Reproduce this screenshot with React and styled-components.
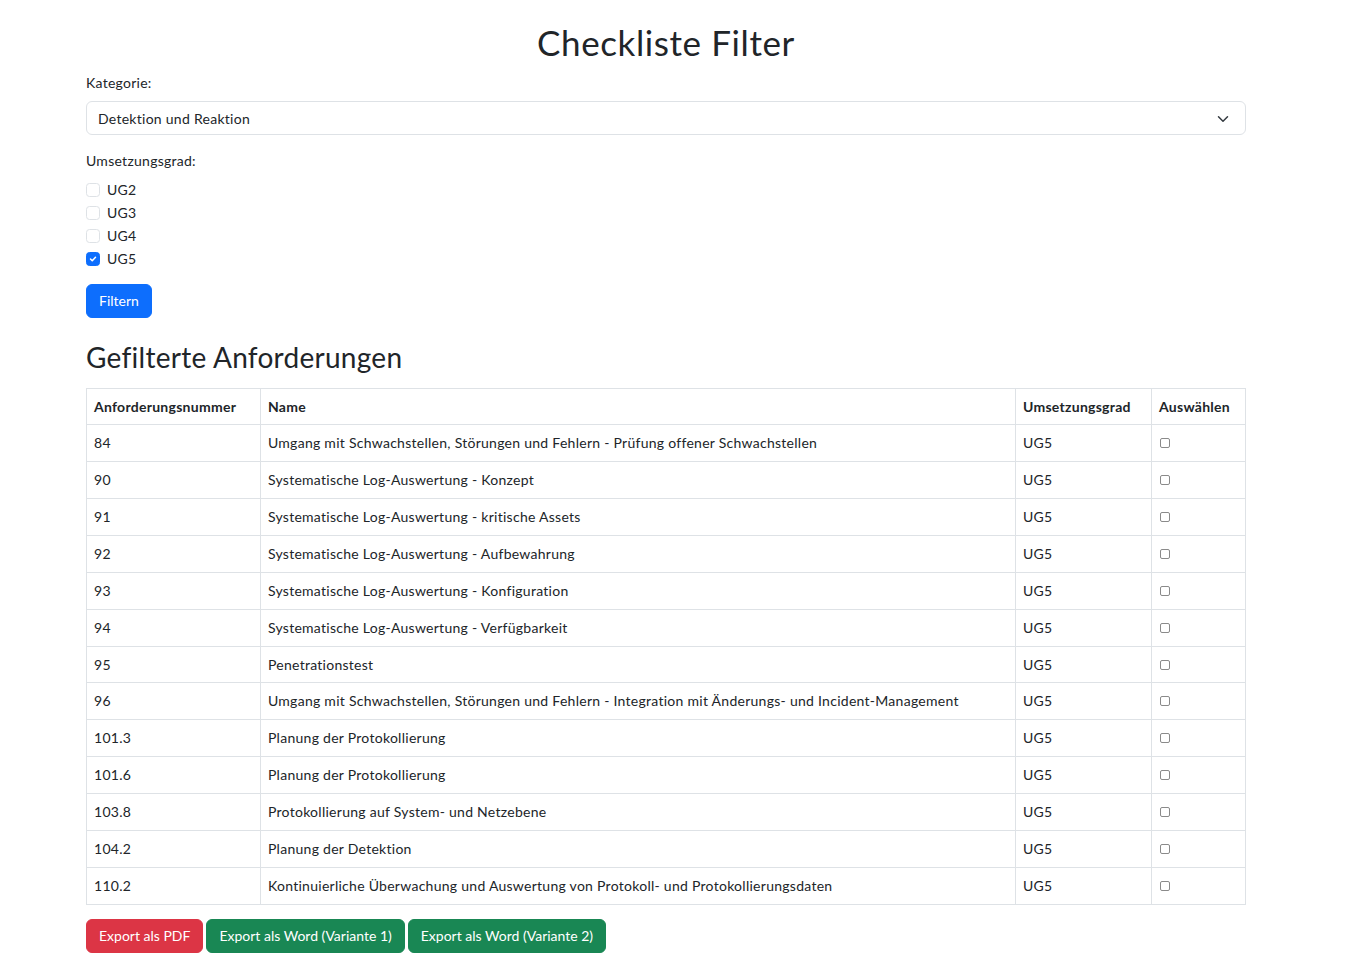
import React, { useState } from "react";
import styled, { createGlobalStyle } from "styled-components";

const GlobalStyle = createGlobalStyle`
  body {
    margin: 0;
    background: #fff;
    color: #212529;
    font-family: Lato, "Noto Sans", sans-serif;
    font-size: 14px;
    line-height: 1.5;
    letter-spacing: 0.27px;
  }
  * { box-sizing: border-box; }
`;

const Container = styled.div`
  width: 1160px;
  margin-left: 86px;
  padding-top: 21px;
  padding-bottom: 20px;
`;

const Title = styled.h1`
  margin: 0 0 9px;
  text-align: center;
  font-size: 35px;
  font-weight: 400;
  line-height: 1.2;
  letter-spacing: 0.6px;
`;

const Label = styled.label`
  display: block;
  margin-bottom: ${(p) => p.$mb || 8}px;
`;

const Field = styled.div`
  margin-bottom: ${(p) => p.$mb}px;
`;

const SelectBox = styled.div`
  position: relative;
  height: 34px;
  border: 1px solid #dee2e6;
  border-radius: 6px;
  display: flex;
  align-items: center;
  padding: 0 36px 0 11px;
  background: #fff;

  svg {
    position: absolute;
    right: 16px;
    top: 11px;
  }
`;

const CheckRow = styled.label`
  display: flex;
  align-items: center;
  gap: 7px;
  height: 23px;
`;

const Check = styled.span`
  width: 14px;
  height: 14px;
  border-radius: 3.5px;
  border: 1px solid ${(p) => (p.$on ? "#0d6efd" : "#dee2e6")};
  background: ${(p) => (p.$on ? "#0d6efd" : "#fff")};
  display: inline-flex;
  align-items: center;
  justify-content: center;
`;

const Button = styled.button`
  font: inherit;
  color: #fff;
  background: ${(p) => p.$bg};
  border: 1px solid ${(p) => p.$bg};
  border-radius: 6px;
  padding: 5px 12px;
  line-height: 22px;
  cursor: pointer;
`;

const Subtitle = styled.h2`
  margin: 23px 0 13px;
  font-size: 28px;
  font-weight: 400;
  line-height: 1.2;
`;

const Table = styled.table`
  width: 100%;
  border-collapse: collapse;
  margin-bottom: 14px;

  th, td {
    border: 1px solid #dee2e6;
    padding: 8px 7px;
    line-height: 19.86px;
    text-align: left;
    vertical-align: top;
  }
  th { font-weight: 700; }
`;

const SmallCheck = styled.span`
  display: inline-block;
  width: 10px;
  height: 10px;
  margin: 5px 0 0 1px;
  border: 1px solid #8a8a8a;
  border-radius: 2px;
  background: #fff;
`;

const ButtonRow = styled.div`
  display: flex;
  gap: 3px;
`;

const rows = [
  ["84", "Umgang mit Schwachstellen, Störungen und Fehlern - Prüfung offener Schwachstellen"],
  ["90", "Systematische Log-Auswertung - Konzept"],
  ["91", "Systematische Log-Auswertung - kritische Assets"],
  ["92", "Systematische Log-Auswertung - Aufbewahrung"],
  ["93", "Systematische Log-Auswertung - Konfiguration"],
  ["94", "Systematische Log-Auswertung - Verfügbarkeit"],
  ["95", "Penetrationstest"],
  ["96", "Umgang mit Schwachstellen, Störungen und Fehlern - Integration mit Änderungs- und Incident-Management"],
  ["101.3", "Planung der Protokollierung"],
  ["101.6", "Planung der Protokollierung"],
  ["103.8", "Protokollierung auf System- und Netzebene"],
  ["104.2", "Planung der Detektion"],
  ["110.2", "Kontinuierliche Überwachung und Auswertung von Protokoll- und Protokollierungsdaten"],
];

const App = () => {
  const [levels, setLevels] = useState({ UG2: false, UG3: false, UG4: false, UG5: true });
  const toggle = (k) => setLevels((prev) => ({ ...prev, [k]: !prev[k] }));

  return (
    <Container>
      <GlobalStyle />
      <Title>Checkliste Filter</Title>
      <Field $mb={15}>
        <Label>Kategorie:</Label>
        <SelectBox>
          Detektion und Reaktion
          <svg width="12" height="12" viewBox="0 0 16 16">
            <path d="M2 5l6 6 6-6" fill="none" stroke="#343a40" strokeWidth="2" strokeLinecap="round" strokeLinejoin="round" />
          </svg>
        </SelectBox>
      </Field>
      <Field $mb={14}>
        <Label $mb={7}>Umsetzungsgrad:</Label>
        {Object.keys(levels).map((k) => (
          <CheckRow key={k} onClick={() => toggle(k)}>
            <Check $on={levels[k]}>
              {levels[k] && (
                <svg width="10" height="10" viewBox="0 0 20 20">
                  <path d="M5 10l3.5 3.5L15 6.5" fill="none" stroke="#fff" strokeWidth="3" strokeLinecap="round" strokeLinejoin="round" />
                </svg>
              )}
            </Check>
            {k}
          </CheckRow>
        ))}
      </Field>
      <Button $bg="#0d6efd">Filtern</Button>
      <Subtitle>Gefilterte Anforderungen</Subtitle>
      <Table>
        <colgroup>
          <col style={{ width: 174 }} />
          <col style={{ width: 756 }} />
          <col style={{ width: 136 }} />
          <col style={{ width: 94 }} />
        </colgroup>
        <thead>
          <tr>
            <th>Anforderungsnummer</th>
            <th>Name</th>
            <th>Umsetzungsgrad</th>
            <th>Auswählen</th>
          </tr>
        </thead>
        <tbody>
          {rows.map(([nr, name]) => (
            <tr key={nr}>
              <td>{nr}</td>
              <td>{name}</td>
              <td>UG5</td>
              <td><SmallCheck /></td>
            </tr>
          ))}
        </tbody>
      </Table>
      <ButtonRow>
        <Button $bg="#dc3545">Export als PDF</Button>
        <Button $bg="#198754">Export als Word (Variante 1)</Button>
        <Button $bg="#198754">Export als Word (Variante 2)</Button>
      </ButtonRow>
    </Container>
  );
};

export default App;
